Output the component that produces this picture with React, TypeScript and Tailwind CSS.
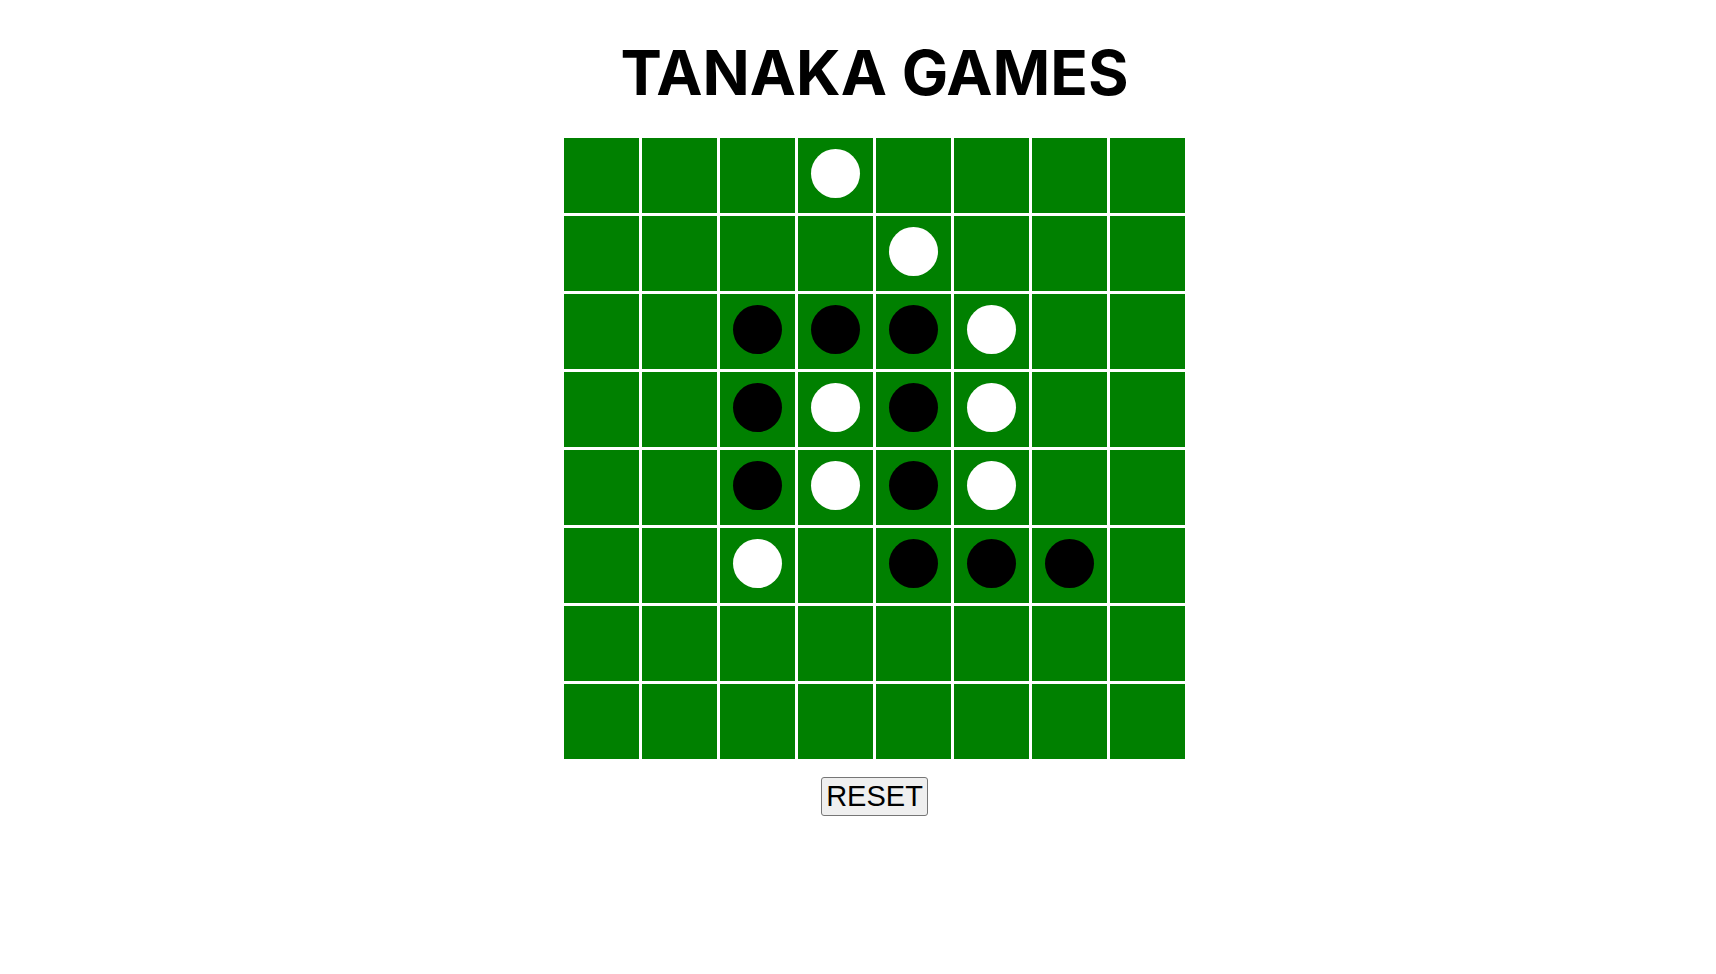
const B = "b";
const W = "w";
const _ = "";

const board: string[][] = [
  [_, _, _, W, _, _, _, _],
  [_, _, _, _, W, _, _, _],
  [_, _, B, B, B, W, _, _],
  [_, _, B, W, B, W, _, _],
  [_, _, B, W, B, W, _, _],
  [_, _, W, _, B, B, B, _],
  [_, _, _, _, _, _, _, _],
  [_, _, _, _, _, _, _, _],
];

function Cell({ stone }: { stone: string }) {
  return (
    <div className="flex h-[75px] w-[75px] items-center justify-center bg-[#008000]">
      {stone === B && <div className="mb-[4px] h-[49px] w-[49px] rounded-full bg-black" />}
      {stone === W && <div className="mb-[4px] h-[49px] w-[49px] rounded-full bg-white" />}
    </div>
  );
}

export default function App() {
  return (
    <div className="flex min-h-[974px] flex-col items-center bg-white pl-[33px]">
      <h1 className="mt-[35px] text-[62px] font-bold leading-[76px] text-black [font-family:Inter,sans-serif]">
        TANAKA GAMES
      </h1>
      <div className="mt-[27px] grid grid-cols-8 gap-[3px]">
        {board.map((row, r) =>
          row.map((stone, c) => <Cell key={`${r}-${c}`} stone={stone} />),
        )}
      </div>
      <button
        type="button"
        className="mt-[18px] h-[39px] rounded-[3px] border border-[#767676] bg-[#efefef] px-[4px] text-[29px] leading-none text-black [font-family:'Liberation_Sans',Arial,sans-serif]"
      >
        RESET
      </button>
    </div>
  );
}
